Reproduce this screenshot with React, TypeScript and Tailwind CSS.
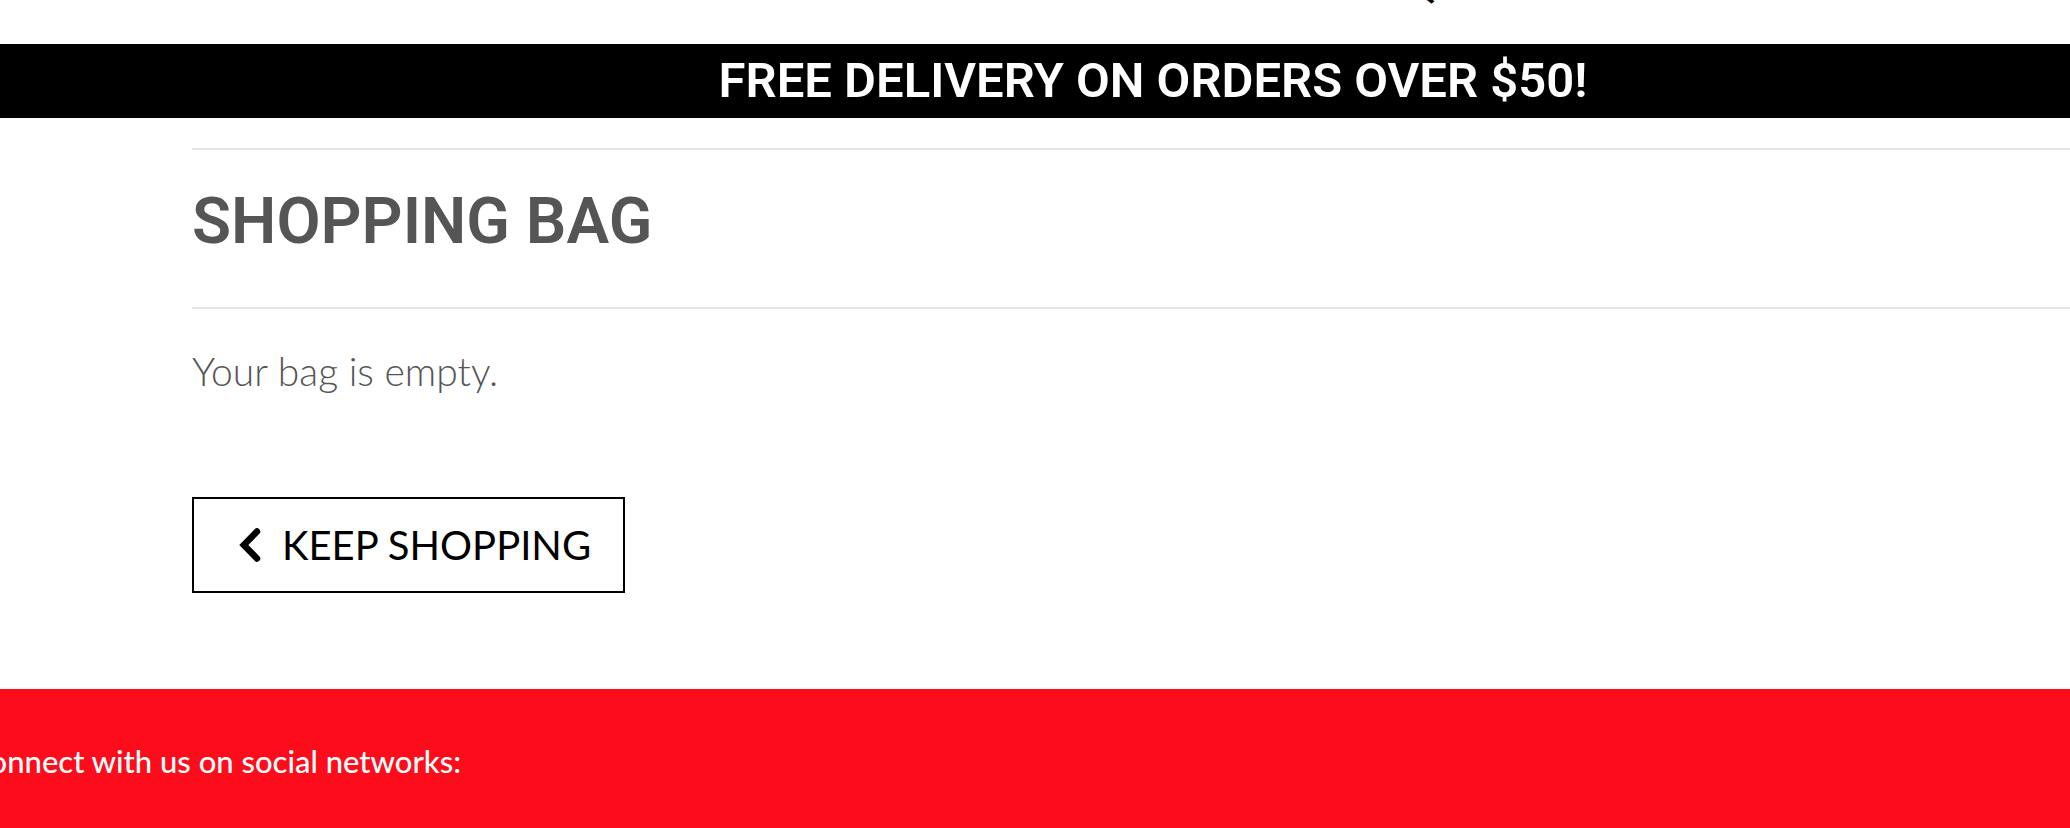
import React from 'react';

const categories = [
  { label: 'OUTLET', className: 'w-[257px]' },
  { label: 'PRODUCTS', className: 'w-[299px]' },
  { label: 'BOOTS', className: 'w-[409px]' },
  { label: 'ACCESSORIES & EQUIPMENT', className: 'w-[565px]' },
  { label: 'SPECIAL OFFERS', className: 'grow' },
];

export default function App() {
  return (
    <div className="flex min-h-screen flex-col overflow-x-hidden bg-white font-['Lato',sans-serif] text-[#555555]">
      <nav aria-label="Categories" className="h-11 overflow-hidden">
        <ul className="-mt-[27px] flex pl-[176px] font-['Roboto',sans-serif] text-[33px] leading-8 font-semibold whitespace-nowrap text-black">
          {categories.map(({ label, className }) => (
            <li key={label} className={`shrink-0 ${className}`}>
              <a href="#">{label}</a>
            </li>
          ))}
        </ul>
      </nav>

      <p className="bg-black pl-[236px] text-center font-['Roboto',sans-serif] text-[49px] leading-[74px] font-semibold text-white">
        FREE DELIVERY ON ORDERS OVER $50!
      </p>

      <main className="grow pt-[30px] pb-24 pl-48">
        <h1 className="border-y-2 border-[#e4e4e4] pt-9 pb-[49px] font-['Roboto',sans-serif] text-[64px] leading-[72px] font-semibold">
          SHOPPING BAG
        </h1>
        <p className="mt-8 text-[39px] leading-[60px] font-light">Your bag is empty.</p>
        <a
          href="#"
          className="mt-24 inline-flex h-24 items-center border-2 border-black pr-8 pl-[45px] text-[40px] leading-[60px] text-black"
        >
          <svg aria-hidden="true" viewBox="0 0 22 36" className="mr-[21px] h-9 w-[22px]" fill="none" stroke="currentColor" strokeWidth="6.5" strokeLinecap="round" strokeLinejoin="miter">
            <path d="M18 4.5 L4.8 18 L18 31.5" />
          </svg>
          KEEP SHOPPING
        </a>
      </main>

      <footer className="flex bg-[#fd0d1b] pt-12 pb-11 text-[31px] leading-12 font-medium text-white">
        <p className="flex w-[461px] shrink-0 justify-end whitespace-nowrap">
          <span>Connect with us on social networks:</span>
        </p>
      </footer>
    </div>
  );
}
